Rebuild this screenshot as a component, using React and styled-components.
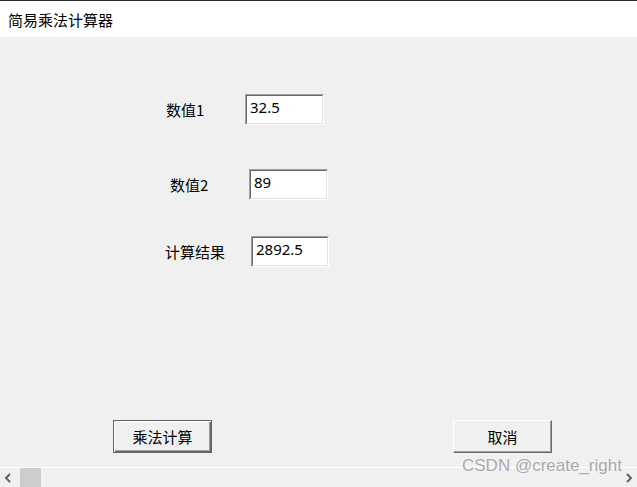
import React from "react";
import styled, { createGlobalStyle, css } from "styled-components";

const Global = createGlobalStyle`
  html, body { margin: 0; padding: 0; }
  body {
    background: #f0f0f0;
    font-family: "Noto Sans", "Noto Sans CJK SC", sans-serif;
    overflow: hidden;
  }
`;

const Window = styled.div`
  width: 637px;
  height: 487px;
  display: flex;
  flex-direction: column;
  position: relative;
  background: #f0f0f0;
  overflow: hidden;
`;

const TitleBar = styled.div`
  height: 36px;
  border-top: 1px solid #2b2b2b;
  background: #ffffff;
  display: flex;
  align-items: center;
  padding-left: 8px;
  font-family: "Noto Sans CJK SC", sans-serif;
  font-size: 15px;
  color: #000;
`;

const Content = styled.div`
  flex: 1;
  display: flex;
  flex-direction: column;
`;

const Form = styled.div`
  display: flex;
  flex-direction: column;
  flex: 1;
`;

const Row = styled.div`
  display: flex;
  align-items: center;
  margin-top: ${(p) => p.$top}px;
  padding-left: ${(p) => p.$left}px;
`;

const Label = styled.div`
  width: ${(p) => p.$width}px;
  font-family: "Noto Sans CJK SC", sans-serif;
  font-size: 15px;
  color: #000;
`;

const Field = styled.div`
  box-sizing: border-box;
  width: ${(p) => p.$width}px;
  height: 31px;
  background: #fff;
  border-style: solid;
  border-width: 1px;
  border-color: #a0a0a0 #ffffff #ffffff #a0a0a0;
  font-family: "Noto Sans", sans-serif;
  font-size: 15px;
  color: #000;
`;

const FieldInner = styled.div`
  box-sizing: border-box;
  height: 100%;
  border-style: solid;
  border-width: 1px;
  border-color: #696969 #e3e3e3 #e3e3e3 #696969;
  padding: 2px 3px 0;
  line-height: 19px;
`;

const ButtonBar = styled.div`
  display: flex;
  gap: 241px;
  padding: 0 0 14px 113px;
`;

const Button = styled.div`
  box-sizing: border-box;
  width: 99px;
  height: 33px;
  display: flex;
  align-items: center;
  justify-content: center;
  background: #f0f0f0;
  font-family: "Noto Sans CJK SC", sans-serif;
  font-size: 15px;
  color: #000;
  ${(p) =>
    p.$default
      ? css`
          border: 1px solid #646464;
          box-shadow: inset 1px 1px 0 #ffffff, inset -1px -1px 0 #696969,
            inset -2px -2px 0 #a0a0a0;
        `
      : css`
          border: 1px solid;
          border-color: #ffffff #696969 #696969 #ffffff;
          box-shadow: inset -1px -1px 0 #a0a0a0;
        `}
`;

const Scrollbar = styled.div`
  height: 19px;
  border-top: 1px solid #ffffff;
  background: #f0f0f0;
  display: flex;
  align-items: stretch;
`;

const Arrow = styled.div`
  width: 16px;
  display: flex;
  align-items: center;
  justify-content: center;
`;

const Track = styled.div`
  flex: 1;
  display: flex;
  padding-left: 4px;
`;

const Thumb = styled.div`
  width: 21px;
  background: #cdcdcd;
`;

const Watermark = styled.div`
  position: absolute;
  left: 462px;
  top: 456px;
  font-family: "Liberation Sans", sans-serif;
  font-size: 17px;
  color: #a8a8a8;
  text-shadow: 0 0 2px #ffffff;
  white-space: nowrap;
`;

const ArrowIcon = ({ dir }) => (
  <svg width="8" height="10" viewBox="0 0 8 10">
    <path
      d={dir === "left" ? "M6 1 L2 5 L6 9" : "M2 1 L6 5 L2 9"}
      fill="none"
      stroke="#606060"
      strokeWidth="2"
    />
  </svg>
);

export default function App() {
  return (
    <>
      <Global />
      <Window>
        <TitleBar>简易乘法计算器</TitleBar>
        <Content>
          <Form>
            <Row $top={57} $left={166}>
              <Label $width={79}>数值1</Label>
              <Field $width={79}>
                <FieldInner>32.5</FieldInner>
              </Field>
            </Row>
            <Row $top={44} $left={170}>
              <Label $width={79}>数值2</Label>
              <Field $width={79}>
                <FieldInner>89</FieldInner>
              </Field>
            </Row>
            <Row $top={36} $left={165}>
              <Label $width={86}>计算结果</Label>
              <Field $width={78}>
                <FieldInner>2892.5</FieldInner>
              </Field>
            </Row>
          </Form>
          <ButtonBar>
            <Button $default>乘法计算</Button>
            <Button>取消</Button>
          </ButtonBar>
        </Content>
        <Scrollbar>
          <Arrow>
            <ArrowIcon dir="left" />
          </Arrow>
          <Track>
            <Thumb />
          </Track>
          <Arrow>
            <ArrowIcon dir="right" />
          </Arrow>
        </Scrollbar>
        <Watermark>CSDN @create_right</Watermark>
      </Window>
    </>
  );
}
